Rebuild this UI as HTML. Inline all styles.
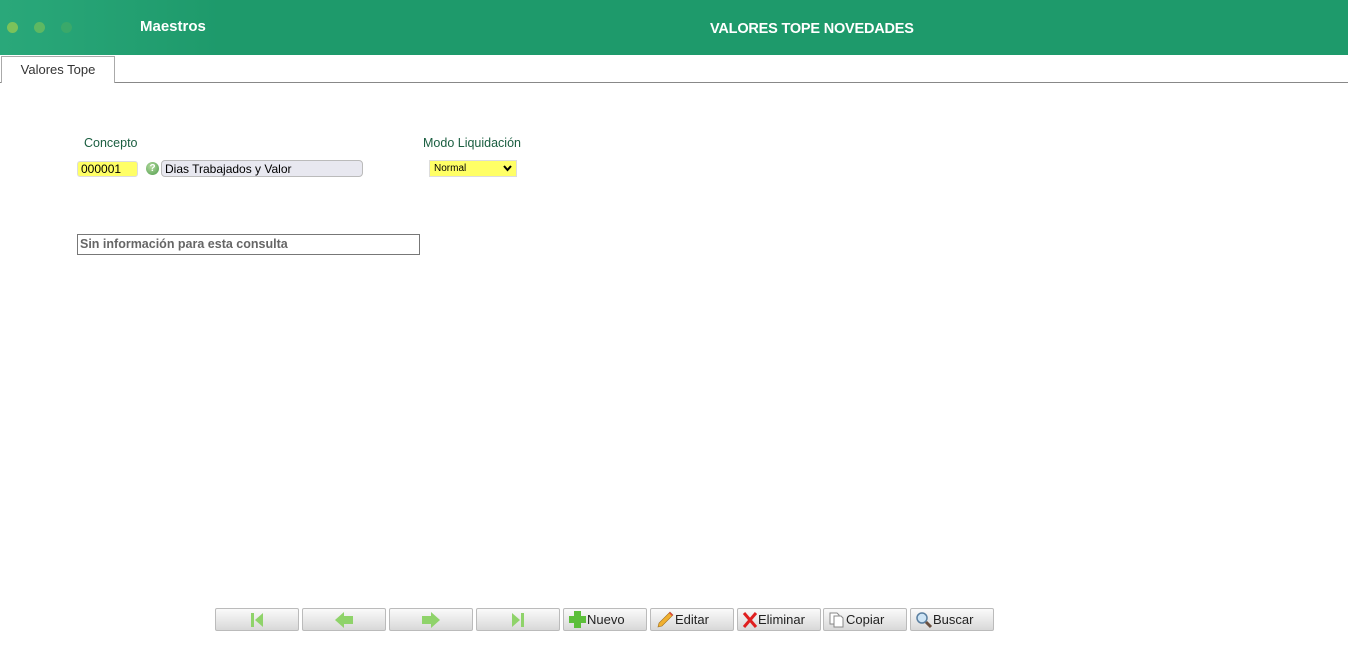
<!DOCTYPE html>
<html><head><meta charset="utf-8"><style>
*{margin:0;padding:0;box-sizing:border-box}
body{width:1348px;height:657px;background:#fff;font-family:"Liberation Sans",sans-serif;position:relative;overflow:hidden}
.hdr{position:absolute;left:0;top:0;width:1348px;height:55px;background:linear-gradient(90deg,#2aa87a 0,#1e9a6b 220px,#1e9a6b 100%)}
.dot{position:absolute;top:22px;width:11px;height:11px;border-radius:50%}
.t1{position:absolute;left:140px;top:18px;color:#fff;font-weight:bold;font-size:15px}
.t2{position:absolute;left:710px;top:21px;color:#fff;font-weight:bold;font-size:14.5px;letter-spacing:-0.2px}
.line{position:absolute;left:0;top:82px;width:1348px;height:1px;background:#888}
.tab{position:absolute;left:1px;top:56px;width:114px;height:27px;border:1px solid #aaa;border-bottom:none;background:#fff;font-size:13px;color:#333;text-align:center;line-height:26px}
.lbl{position:absolute;font-size:12.5px;color:#1a5e40}
.in{position:absolute;font-size:12px;height:16px;line-height:14px;border:1px solid #ccc;border-radius:3px;padding-left:3px}
.msg{position:absolute;left:77px;top:234px;width:343px;height:21px;border:1px solid #777;font-size:12.5px;font-weight:bold;color:#666;padding-left:2px;line-height:19px}
.btn{position:absolute;top:608px;width:84px;height:23px;border:1px solid #bbb;border-radius:2px;background:linear-gradient(#fafafa,#e6e6e6 60%,#d8d8d8);font-size:13px;color:#222;display:flex;align-items:center;justify-content:center}
.btn.l{justify-content:flex-start;padding-left:4px}
</style></head><body>
<div class="hdr">
<div class="dot" style="left:7px;background:#7bc25a"></div>
<div class="dot" style="left:34px;background:#5eb862"></div>
<div class="dot" style="left:61px;background:#3aa96a"></div>
<div class="t1">Maestros</div>
<div class="t2">VALORES TOPE NOVEDADES</div>
</div>
<div class="line"></div>
<div class="tab">Valores Tope</div>
<div class="lbl" style="left:84px;top:136px">Concepto</div>
<div class="lbl" style="left:423px;top:136px">Modo Liquidación</div>
<div class="in" style="left:77px;top:161px;width:61px;background:#ffff66;border-color:#ddd">000001</div>
<div style="position:absolute;left:146px;top:162px;width:13px;height:13px;border-radius:50%;background:radial-gradient(circle at 40% 35%,#b5dca0,#4d9a4a);color:#fff;font-size:10px;font-weight:bold;text-align:center;line-height:13px">?</div>
<div class="in" style="left:161px;top:160px;width:202px;height:17px;background:#e8e8f0;border-color:#bbb;border-radius:4px;line-height:16px">Dias Trabajados y Valor</div>
<div style="position:absolute;left:429px;top:160px;width:88px;height:17px;background:#ffff66;border:1px solid #ddd;font-size:10px;line-height:15px;padding-left:4px">Normal<svg style="position:absolute;right:4px;top:4px" width="9" height="7"><path d="M1 1 L4.5 5 L8 1" stroke="#000" stroke-width="2" fill="none"/></svg></div>
<div class="msg">Sin información para esta consulta</div>

<div class="btn" style="left:215px"><svg width="18" height="18"><rect x="3" y="2" width="3" height="14" fill="#8fd36a"/><path d="M15 2 L7 9 L15 16Z" fill="#8fd36a"/></svg></div>
<div class="btn" style="left:302px"><svg width="20" height="18"><path d="M1 9 L10 1 V5 H19 V13 H10 V17Z" fill="#8fd36a"/></svg></div>
<div class="btn" style="left:389px"><svg width="20" height="18"><path d="M19 9 L10 1 V5 H1 V13 H10 V17Z" fill="#8fd36a"/></svg></div>
<div class="btn" style="left:476px"><svg width="18" height="18"><rect x="12" y="2" width="3" height="14" fill="#8fd36a"/><path d="M3 2 L11 9 L3 16Z" fill="#8fd36a"/></svg></div>
<div class="btn l" style="left:563px"><svg width="19" height="19"><path d="M6 1H13V6H18V13H13V18H6V13H1V6H6Z" fill="#5cbf3a"/></svg>Nuevo</div>
<div class="btn l" style="left:650px"><svg width="20" height="18"><path d="M3 16 L4 12 L15 1 L18 4 L7 15Z" fill="#f0b030" stroke="#a07020" stroke-width=".6"/><path d="M15 1 L18 4 L17 5 L14 2Z" fill="#e04040"/></svg>Editar</div>
<div class="btn l" style="left:737px"><svg width="16" height="18"><path d="M2 2 L14 16 M14 2 L2 16" stroke="#e02020" stroke-width="3"/></svg>Eliminar</div>
<div class="btn l" style="left:823px"><svg width="18" height="18"><path d="M2 2H9L11 4V13H2Z" fill="#fff" stroke="#888"/><path d="M6 5H13L15 7V16H6Z" fill="#fff" stroke="#888"/></svg>Copiar</div>
<div class="btn l" style="left:910px"><svg width="18" height="18"><circle cx="7" cy="7" r="5" fill="#cde4f5" stroke="#5a7fa0" stroke-width="1.5"/><path d="M11 11 L16 16" stroke="#6a5040" stroke-width="3"/></svg>Buscar</div>
</body></html>
